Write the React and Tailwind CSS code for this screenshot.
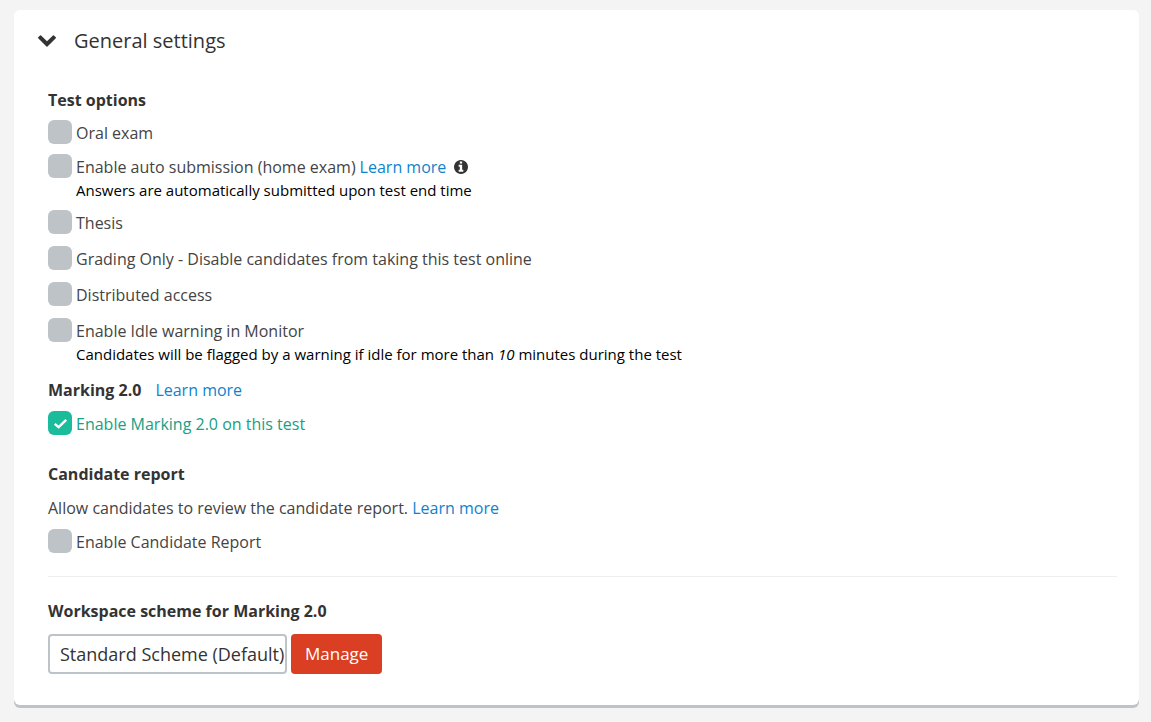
/**
 * General settings panel - test options, marking and candidate report
 */
import React, { useState } from 'react'

const InfoIcon = () => (
  <svg viewBox="128 128 1536 1536" className="size-3.5" fill="currentColor" aria-hidden="true">
    <path d="M1152 1376v-160q0-14-9-23t-23-9h-96v-512q0-14-9-23t-23-9h-320q-14 0-23 9t-9 23v160q0 14 9 23t23 9h96v320h-96q-14 0-23 9t-9 23v160q0 14 9 23t23 9h448q14 0 23-9t9-23zm-128-896v-160q0-14-9-23t-23-9h-192q-14 0-23 9t-9 23v160q0 14 9 23t23 9h192q14 0 23-9t9-23zm640 416q0 209-103 385.5t-279.5 279.5-385.5 103-385.5-103-279.5-279.5-103-385.5 103-385.5 279.5-279.5 385.5-103 385.5 103 279.5 279.5 103 385.5z" />
  </svg>
)

const LearnMore = ({ className = '' }) => (
  <a href="#learn-more" className={`text-base text-[#0e83cd] hover:underline ${className}`}>
    Learn more
  </a>
)

const Checkbox = ({ id, label, defaultChecked = false, children }) => {
  const [checked, setChecked] = useState(defaultChecked)

  return (
    <div className="flex items-center h-6">
      <span className="grid shrink-0 size-6 mr-1">
        <input
          id={id}
          type="checkbox"
          checked={checked}
          onChange={(e) => setChecked(e.target.checked)}
          className="col-start-1 row-start-1 appearance-none size-6 rounded-md bg-[#bdc3c7] checked:bg-[#1abc9c] cursor-pointer"
        />
        {checked && (
          <svg
            viewBox="0 0 24 24"
            className="col-start-1 row-start-1 size-6 pointer-events-none"
            fill="none"
            stroke="white"
            strokeWidth="2.4"
            aria-hidden="true"
          >
            <path d="M6.8 12.8l3.8 3.4 7.6-7.4" />
          </svg>
        )}
      </span>
      <div className="flex items-center pt-0.5">
        <label
          htmlFor={id}
          className={`text-base cursor-pointer ${checked ? 'text-[#16a085]' : 'text-[#444444]'}`}
        >
          {label}
        </label>
        {children}
      </div>
    </div>
  )
}

const Hint = ({ children }) => (
  <p className="pl-7 pt-1 text-[15px] leading-4 text-black">{children}</p>
)

const SectionTitle = ({ children }) => (
  <h3 className="text-base font-bold text-[#333333]">{children}</h3>
)

const App = () => {
  const [expanded, setExpanded] = useState(true)

  return (
    <div className="min-h-screen bg-[#f4f4f4] pt-2.5 pl-3.5 pr-3 pb-4 font-['Open_Sans',sans-serif]">
      <section className="bg-white rounded-md shadow-[0_3px_0_#bdc3c7] pt-4 pl-6 pr-[22px] pb-[31px]">
        {/* Header */}
        <h2>
          <button
            type="button"
            aria-expanded={expanded}
            onClick={() => setExpanded(!expanded)}
            className="flex items-center gap-[18px] text-xl leading-[30px] text-[#333333] cursor-pointer"
          >
            <svg
              viewBox="90 533 1612 1035"
              className={`w-[18px] h-3 ${expanded ? '' : '-rotate-90'}`}
              fill="currentColor"
              aria-hidden="true"
            >
              <path d="M1683 808l-742 741q-19 19-45 19t-45-19l-742-741q-19-19-19-45.5t19-45.5l166-165q19-19 45-19t45 19l531 531 531-531q19-19 45-19t45 19l166 165q19 19 19 45.5t-19 45.5z" />
            </svg>
            General settings
          </button>
        </h2>

        {expanded && (
          <div className="pl-2.5 pt-8">
            {/* Test options */}
            <SectionTitle>Test options</SectionTitle>
            <div className="pt-2 flex flex-col gap-3">
              <div className="flex flex-col gap-2.5">
                <Checkbox id="oral-exam" label="Oral exam" />
                <div>
                  <Checkbox id="auto-submission" label="Enable auto submission (home exam)">
                    <LearnMore className="ml-1" />
                    <button type="button" aria-label="More information" className="ml-2 text-[#333333]">
                      <InfoIcon />
                    </button>
                  </Checkbox>
                  <Hint>Answers are automatically submitted upon test end time</Hint>
                </div>
              </div>
              <Checkbox id="thesis" label="Thesis" />
              <Checkbox
                id="grading-only"
                label="Grading Only - Disable candidates from taking this test online"
              />
              <Checkbox id="distributed-access" label="Distributed access" />
              <div>
                <Checkbox id="idle-warning" label="Enable Idle warning in Monitor" />
                <Hint>
                  Candidates will be flagged by a warning if idle for more than <em>10</em> minutes during the test
                </Hint>
              </div>
            </div>

            {/* Marking */}
            <div className="flex items-center gap-3.5 pt-4 pb-[9px]">
              <SectionTitle>Marking 2.0</SectionTitle>
              <LearnMore />
            </div>
            <Checkbox id="marking" label="Enable Marking 2.0 on this test" defaultChecked />

            {/* Candidate report */}
            <div className="pt-[27px] pb-[23px]">
              <SectionTitle>Candidate report</SectionTitle>
              <p className="pt-2.5 pb-[9px] text-base text-[#444444]">
                Allow candidates to review the candidate report. <LearnMore />
              </p>
              <Checkbox id="candidate-report" label="Enable Candidate Report" />
            </div>

            {/* Workspace scheme */}
            <div className="border-t border-[#eeeeee] pt-[22px]">
              <label htmlFor="scheme" className="block text-base font-bold text-[#333333]">
                Workspace scheme for Marking 2.0
              </label>
              <div className="flex gap-1 pt-[11px]">
                <select
                  id="scheme"
                  className="appearance-none w-[239px] h-10 pl-2.5 border-2 border-[#bdc3c7] rounded bg-white text-lg text-[#333333]"
                >
                  <option>Standard Scheme (Default)</option>
                </select>
                <button
                  type="button"
                  className="h-10 px-3.5 rounded bg-[#da3e23] text-[17px] text-white cursor-pointer hover:bg-[#c2361e]"
                >
                  Manage
                </button>
              </div>
            </div>
          </div>
        )}
      </section>
    </div>
  )
}

export default App
